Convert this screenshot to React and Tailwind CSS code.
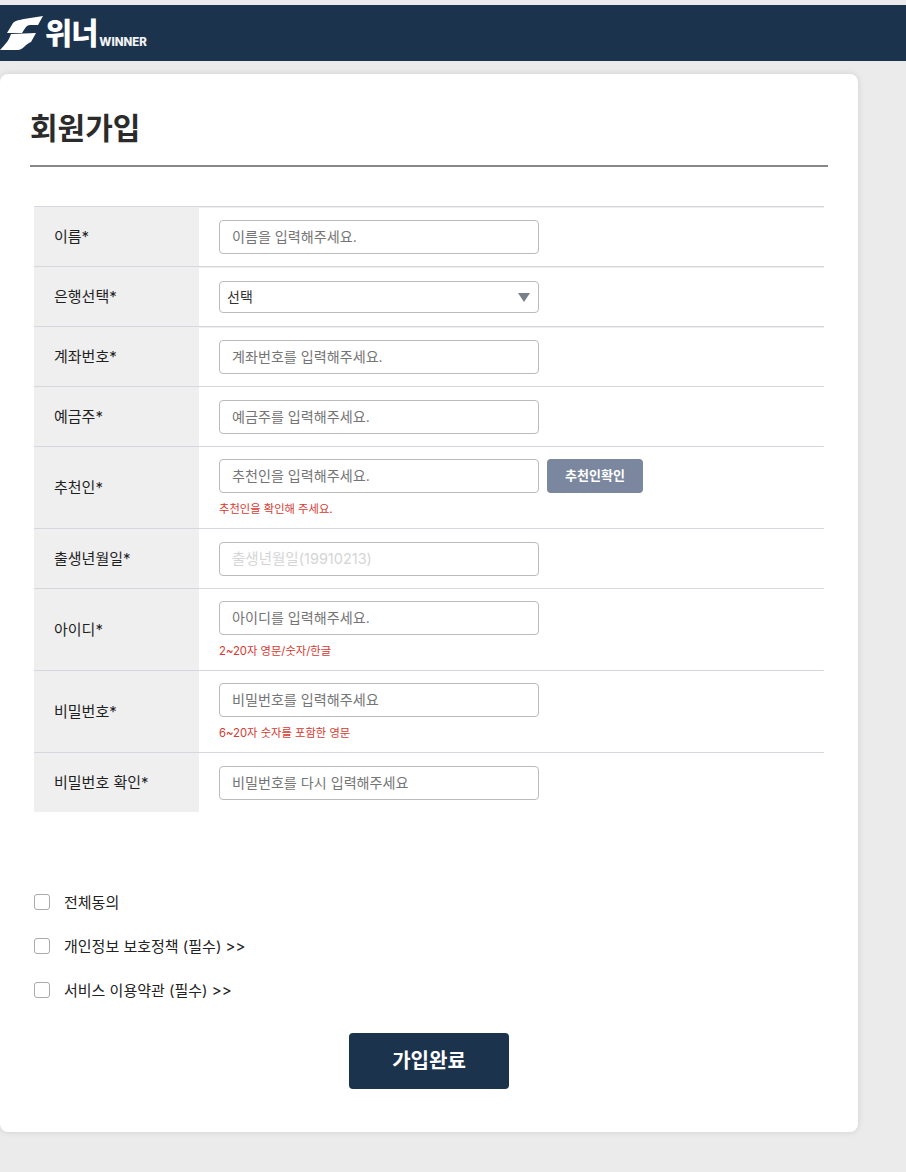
import React from 'react';

const ROWS = [
  { label: '이름*', placeholder: '이름을 입력해주세요.', double: true },
  { label: '은행선택*', select: true, double: true },
  { label: '계좌번호*', placeholder: '계좌번호를 입력해주세요.', double: true },
  { label: '예금주*', placeholder: '예금주를 입력해주세요.' },
  { label: '추천인*', placeholder: '추천인을 입력해주세요.', button: '추천인확인', help: '추천인을 확인해 주세요.' },
  { label: '출생년월일*', placeholder: '출생년월일(19910213)', light: true },
  { label: '아이디*', placeholder: '아이디를 입력해주세요.', help: '2~20자 영문/숫자/한글' },
  { label: '비밀번호*', placeholder: '비밀번호를 입력해주세요', help: '6~20자 숫자를 포함한 영문' },
  { label: '비밀번호 확인*', placeholder: '비밀번호를 다시 입력해주세요' },
];

const AGREEMENTS = ['전체동의', '개인정보 보호정책 (필수) >>', '서비스 이용약관 (필수) >>'];

function Logo() {
  return (
    <div className="flex items-center">
      <svg width="44" height="36" viewBox="0 0 44 36" className="block">
        <path d="M7 18 L13 8 C16 5 20 5 24 4 C30 3 37 2 43 1 L38 10 L30 10 C26 10 25 14 22 18 Z" fill="#fff" />
        <path d="M11 19 L36 18 L31 27 C28 28 26 30 24 32 C21 35 18 35 15 35 L0 35 C3 32 5 29 7 27 C9 24 10 22 11 19 Z" fill="#fff" />
      </svg>
      <span className="ml-[1px] text-[29.5px] leading-[36px] font-black tracking-[-1px] text-white">위너</span>
      <span className="mt-[17px] ml-[2px] text-[11.5px] leading-[14px] font-extrabold text-[#f2f2f2]">WINNER</span>
    </div>
  );
}

function FormRow({ row }) {
  return (
    <div className={`flex border-t border-[#d6d6dc] ${row.help ? 'h-[82px]' : 'h-[60px]'}`}>
      <div className="flex w-[165px] shrink-0 items-center bg-[#efefef] pt-[2px] pl-5 text-[15px] text-[#1f1f1f]">
        {row.label}
      </div>
      <div className={`flex-1 border-t px-5 ${row.double ? 'border-[#ededf0]' : 'border-transparent'} ${row.select ? 'pt-[13px]' : row.help ? 'pt-[11px]' : 'pt-3'}`}>
        <div className="flex gap-2">
          {row.select ? (
            <div className="flex h-8 w-80 items-center justify-between rounded border border-[#bbb] pr-[8px] pb-[2px] pl-[7px] text-[14px] text-[#333]">
              <span>선택</span>
              <span className="mt-[2px] h-0 w-0 border-x-[6px] border-t-[9px] border-x-transparent border-t-[#78808c]" />
            </div>
          ) : (
            <input
              readOnly
              placeholder={row.placeholder}
              className={`h-[34px] w-80 rounded border border-[#bbb] px-3 pb-[2px] ${row.light ? 'text-[14.5px] placeholder:text-[#d5d5d5]' : 'text-[14.1px] placeholder:text-[#757575]'}`}
            />
          )}
          {row.button && (
            <button className="h-[34px] w-24 rounded bg-[#7b879f] text-[13px] font-semibold text-white">
              {row.button}
            </button>
          )}
        </div>
        {row.help && <p className="mt-2 text-[11.3px] leading-4 text-[#d5392f]">{row.help}</p>}
      </div>
    </div>
  );
}

export default function App() {
  return (
    <div className="min-h-[1172px] bg-[#ebebeb] pt-[5px] font-['Inter','Noto_Sans_CJK_KR',sans-serif]">
      <header className="flex h-14 items-center bg-[#1c334e]">
        <Logo />
      </header>
      <main className="mt-[13px] h-[1058px] w-[858px] rounded-lg bg-white px-[30px] pt-[32px] shadow-[0_0_6px_rgba(0,0,0,0.12)]">
        <h1 className="border-b-2 border-[#888] pb-[15px] text-[30px] leading-[44px] font-bold text-[#2b2b2b]">
          회원가입
        </h1>
        <div className="mx-1 mt-[39px]">
          {ROWS.map((row) => (
            <FormRow key={row.label} row={row} />
          ))}
        </div>
        <div className="mx-1 mt-[79px] space-y-[22px]">
          {AGREEMENTS.map((text) => (
            <label key={text} className="flex h-[22px] items-center gap-[14px] text-[15px] text-[#222]">
              <span className="-mt-[1px] h-4 w-4 rounded-[3px] border border-[#aaa] bg-white" />
              <span className="pt-[2px]">{text}</span>
            </label>
          ))}
        </div>
        <div className="mt-8 flex justify-center">
          <button className="h-14 w-40 rounded bg-[#1c334e] text-[20px] font-bold text-white">가입완료</button>
        </div>
      </main>
    </div>
  );
}
